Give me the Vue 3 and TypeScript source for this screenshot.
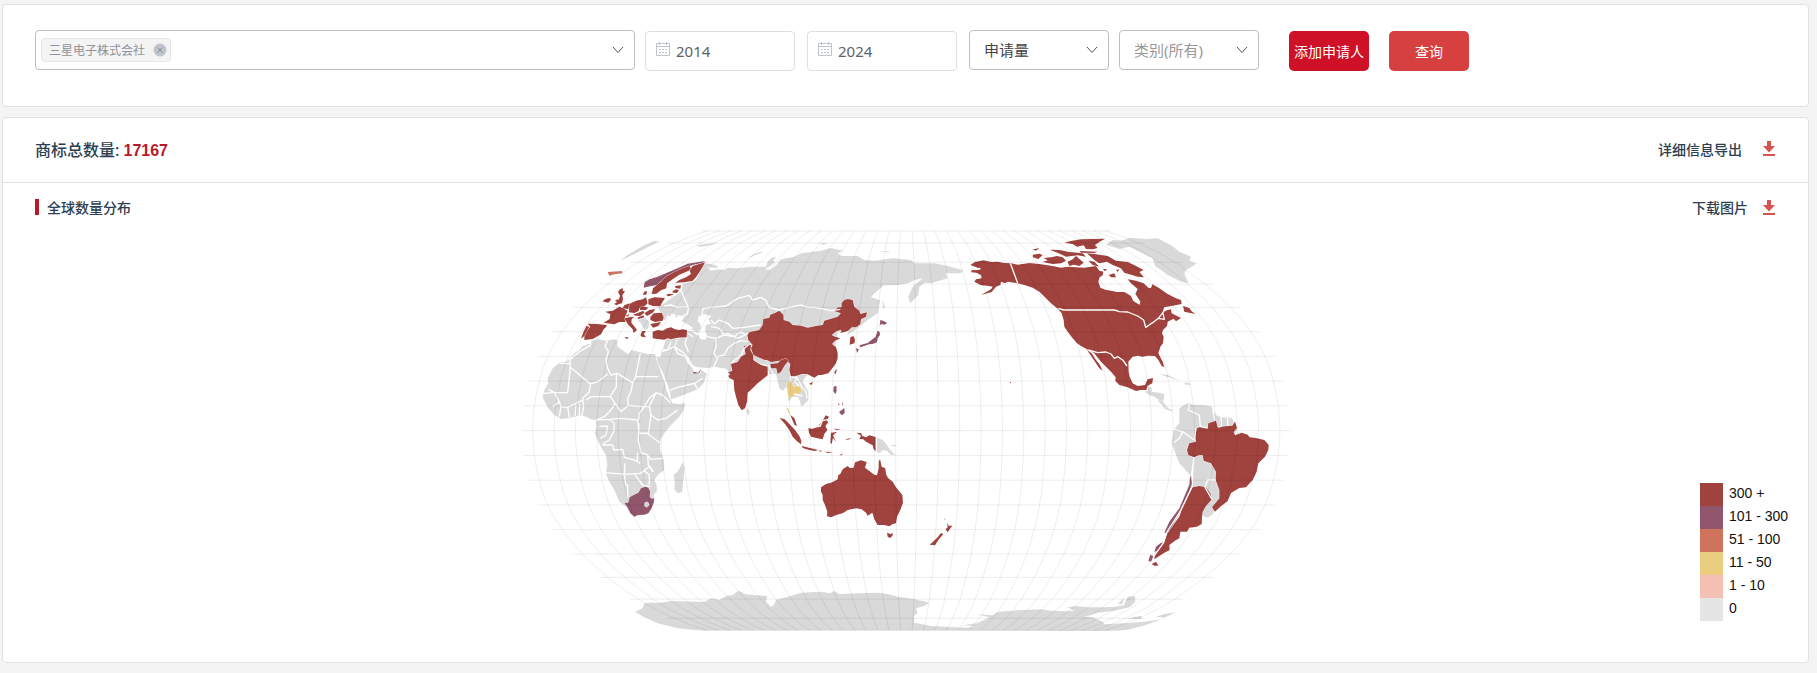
<script setup lang="ts">
import { ref } from 'vue'

interface Shape { kind: string; at: [number, number]; d: string }

const applicants = ref<string[]>(['三星电子株式会社'])
const fromYear = ref('2014')
const toYear = ref('2024')
const metric = ref('申请量')
const category = ref('')

const legend = [
  { label: '300 +', level: 'l300' },
  { label: '101 - 300', level: 'l101' },
  { label: '51 - 100', level: 'l51' },
  { label: '11 - 50', level: 'l11' },
  { label: '1 - 10', level: 'l1' },
  { label: '0', level: 'l0' },
]

// Robinson projection tables, one entry per 5 degrees of latitude
const RX = [1, .9986, .9954, .99, .9822, .973, .96, .9427, .9216, .8962, .8679, .835, .7986, .7597, .7186, .6732, .6213, .5722, .5322]
const RY = [0, .062, .124, .186, .248, .31, .372, .434, .4958, .5571, .6176, .6769, .7346, .7903, .8435, .8936, .9394, .9761, 1]
const CX = 1186
const CY = 632
const HALF_W = 1153
const HALF_H = 599

function meridian(offset: number): string {
  const pts: string[] = []
  for (let i = -18; i <= 18; i++) {
    const k = Math.abs(i)
    const x = CX + (offset / 180) * HALF_W * RX[k]
    const y = CY + Math.sign(i) * HALF_H * RY[k]
    pts.push(`${x.toFixed(1)},${y.toFixed(1)}`)
  }
  return 'M' + pts.join('L')
}
function parallel(i: number): string {
  const k = Math.abs(i)
  const y = CY + Math.sign(i) * HALF_H * RY[k]
  return `M${CX - HALF_W * RX[k]},${y}H${CX + HALF_W * RX[k]}`
}
const lines: string[] = []
for (let o = -175; o <= 175; o += 10) lines.push(meridian(o))
for (let i = -18; i <= 18; i += 2) lines.push(parallel(i))
const graticule = lines.join('')

const WEST: [number, number] = [0, 0]
const SOUTHWEST: [number, number] = [0, 600]
const ASIA: [number, number] = [660, 0]
const OCEANIA: [number, number] = [660, 540]
const NORTHAM: [number, number] = [1320, 0]
const SOUTHAM: [number, number] = [1800, 540]
const POLAR: [number, number] = [1320, 1050]

const shapes: Shape[] = [
  // Africa
  { kind: 'none', at: WEST, d: 'M240,362L262,358L285,362L310,358L320,362L318,378L330,388L345,398L352,402L362,390L385,396L410,402L432,402L437,420L447,448L455,470L462,492L468,515L476,535L485,550L505,553L522,549L518,570L505,590L480,615L460,640L448,660L447,690L458,720L460,750L440,765L430,780L437,796L438,812L428,825L429,850L415,875L400,884L370,890L352,865L325,845L310,810L295,785L285,762L289,735L285,705L275,690L262,665L252,640L257,620L255,600L240,598L225,590L205,586L190,590L170,595L150,597L130,585L112,565L104,550L95,532L100,510L112,490L110,475L118,460L125,445L145,428L165,425L175,418L190,400L205,390L215,378L240,370Z' },
  { kind: 'none', at: SOUTHWEST, d: 'M515,127L521,145L517,180L514,216L500,220L490,207L492,188L488,165L502,152Z' },
  { kind: 'l101', at: SOUTHWEST, d: 'M340,248L352,248L356,232L368,225L382,218L390,205L403,200L412,203L418,215L416,230L422,236L430,235L428,248L420,268L412,280L400,284L380,285L370,290L358,280L350,263Z' },
  { kind: 'none', at: SOUTHWEST, d: 'M402,248L410,246L415,254L408,262L400,257Z' },
  // Eurasia
  { kind: 'none', at: WEST, d: 'M465,358L458,380L450,400L449,410L437,412L441,430L455,455L468,490L478,520L480,538L500,532L530,520L560,508L578,490L585,470L588,462L572,450L568,462L552,462L545,445L530,430L522,412L530,408L545,435L560,442L590,444L610,440L645,446L655,458L700,450L765,430L775,462L795,462L805,505L815,512L826,500L830,520L832,545L845,530L862,530L872,560L892,540L892,515L875,485L885,468L900,462L960,440L980,335L1018,325L1008,345L1025,335L1045,320L1070,300L1100,280L1107,240L1080,232L1085,225L1118,196L1160,195L1190,190L1212,180L1235,175L1205,200L1192,230L1198,250L1222,225L1225,200L1240,188L1260,190L1310,175L1305,160L1350,160L1356,151L1310,138L1270,130L1210,130L1200,120L1145,115L1090,122L1060,120L1040,108L990,108L980,100L995,92L960,84L930,92L870,100L850,110L810,118L800,130L786,122L796,110L780,115L770,125L765,140L720,140L680,145L650,143L640,150L620,148L600,152L588,142L618,144L620,138L600,132L580,130L555,180L515,192L512,215L490,228L460,250L440,262L452,282L456,300L470,300L478,288L500,293L498,285L520,290L512,303L530,313L548,325L528,330L527,352L500,357Z' },
  { kind: 'sea', at: WEST, d: 'M562,290L580,282L602,288L592,296L600,312L585,315L582,332L588,345L584,359L568,357L558,340L570,325L568,312L560,303Z' },
  { kind: 'sea', at: WEST, d: 'M462,300L470,285L480,290L478,280L495,284L492,294L508,290L500,300L528,316L528,328L480,320L458,318Z' },
  { kind: 'sea', at: ASIA, d: 'M102,148L118,138L132,126L144,120L140,132L118,150Z' },
  { kind: 'none', at: ASIA, d: 'M46,116L70,102L95,94L92,98L68,107Z M262,68L290,70L275,74Z M445,94L478,94L470,97Z M455,240L462,262L456,268Z M48,563L57,575L52,586L48,580Z' },
  { kind: 'none', at: WEST, d: 'M558,76L580,72L620,70L595,76L568,81Z M330,122L345,108L365,96L395,78L430,62L445,65L410,82L370,102L350,112Z' },
  { kind: 'l300', at: WEST, d: 'M425,335L440,330L455,332L468,325L480,322L492,328L505,330L515,328L528,330L527,352L500,353L480,358L470,355L460,359L445,358L425,355Z' },
  { kind: 'l51', at: WEST, d: 'M290,156L300,155L333,153L334,160L310,163L295,167Z M338,287L355,282L352,290Z' },
  { kind: 'l300', at: WEST, d: 'M310,252L318,246L312,241L324,238L327,227L321,216L328,207L336,205L335,212L342,214L334,226L336,238L333,250L322,253L316,256Z M274,244L285,236L297,234L300,239L292,248Z' },
  { kind: 'l101', at: WEST, d: 'M398,203L401,187L415,178L440,170L475,155L500,145L530,131L550,128L583,123L575,128L545,135L510,148L465,170L440,195L420,198Z M545,455L562,458L572,446L565,460L548,461Z' },
  { kind: 'l300', at: WEST, d: 'M422,222L426,205L450,185L465,170L490,156L515,145L535,138L540,145L533,152L505,164L487,176L468,190L466,205L450,211L436,221Z M493,188L505,180L525,172L540,162L536,152L545,138L582,127L575,140L568,152L555,172L545,182L520,187Z' },
  { kind: 'l300', at: WEST, d: 'M466,224L475,221L490,223L482,231L470,229Z M484,214L495,208L504,210L498,219L486,218Z M492,198L510,196L508,206L494,204Z M395,224L400,215L408,212L406,224Z' },
  { kind: 'l300', at: WEST, d: 'M283,275L305,272L325,260L335,264L350,272L342,290L344,306L325,306L310,313L278,308L296,297L298,283Z M355,252L375,242L395,238L405,232L410,250L402,257L385,265L383,273L370,279L354,277Z M335,264L340,256L355,250L352,268Z' },
  { kind: 'l300', at: WEST, d: 'M412,238L430,232L462,234L452,250L448,259L425,258L412,253Z M385,264L395,259L412,263L405,270L388,270Z M366,284L380,279L397,272L400,278L388,288L374,287Z M400,280L415,270L433,267L425,278L408,288Z M418,292L428,280L452,278L458,292L455,302L432,306L418,300Z M418,312L450,306L442,318L426,323Z M380,292L400,286L398,293L382,297Z' },
  { kind: 'none', at: WEST, d: 'M380,300L402,294L415,305L412,325L400,330L392,313Z' },
  { kind: 'l300', at: WEST, d: 'M388,345L394,333L405,333L398,342L405,352L392,350Z M340,295L355,292L370,290L362,298L361,308L372,322L378,330L368,339L365,328L350,312L345,302Z M340,352L352,352L349,358Z' },
  { kind: 'l300', at: WEST, d: 'M230,311L258,312L287,315L286,320L278,328L270,343L245,357L220,360L220,350L232,328L238,320Z M226,318L235,320L220,348L210,356L217,337Z' },
  // Asia
  { kind: 'l300', at: ASIA, d: 'M48,340L60,335L85,330L95,315L97,297L115,293L118,284L130,280L145,272L157,285L158,300L175,305L185,315L210,317L230,323L255,318L275,315L280,302L320,290L330,280L308,272L322,262L332,262L332,250L340,240L350,237L365,240L370,260L385,272L388,282L408,277L405,290L390,298L388,313L375,322L362,322L352,332L338,337L328,338L332,330L318,332L302,345L312,350L328,355L312,362L303,372L315,382L320,398L320,415L315,430L300,450L292,460L272,465L262,465L250,473L240,468L228,462L212,462L195,468L180,470L175,450L178,432L165,420L145,422L120,426L108,420L90,420L68,408L60,385L65,375L52,360Z' },
  { kind: 'l300', at: ASIA, d: 'M0,432L20,426L30,410L44,402L38,378L60,375L58,390L68,408L70,422L90,435L110,440L110,466L95,478L80,490L65,505L50,518L48,545L42,565L32,571L22,555L15,530L10,510L8,480L-4,475L-8,468L-2,462L-10,458L4,452Z M118,432L140,430L150,420L165,416L172,422L160,438L150,455L140,462L136,445L120,445Z' },
  { kind: 'none', at: ASIA, d: 'M68,406L80,412L108,424L112,436L88,430L68,420Z' },
  { kind: 'l300', at: ASIA, d: 'M235,490L246,486L240,496Z M358,352L368,347L372,360L370,370L356,374Z M312,452L318,447L314,462L310,460Z M178,585L190,594L198,618L190,614Z' },
  { kind: 'l11', at: ASIA, d: 'M167,488L180,484L187,500L205,498L212,514L206,521L192,522L185,530L178,533L172,528Z M165,562L172,566L179,584L174,580Z' },
  { kind: 'l101', at: ASIA, d: 'M440,332L446,336L447,345L440,355L438,367L425,372L414,373L400,378L388,382L385,376L410,369L425,357L434,350Z M448,300L456,302L468,308L462,314L450,312L446,319Z M375,385L384,388L378,399Z M308,500L316,497L317,512L313,523L307,514Z M325,575L340,564L341,578L334,586L326,580Z M322,548L326,554L322,556Z M333,543L337,555L334,556Z' },
  { kind: 'l300', at: OCEANIA, d: 'M146,54L160,57L175,72L190,88L205,108L211,122L210,133L198,124L185,110L175,90L162,72Z M212,138L225,141L240,145L262,150L252,153L232,149L215,144Z M232,85L245,86L262,78L275,62L284,46L294,50L288,60L291,68L283,78L289,90L280,102L275,118L260,115L240,110L234,98Z M300,98L318,96L306,106L315,126L306,114L302,131L298,130Z M376,98L390,99L394,108L405,112L415,106L436,112L436,155L428,148L425,136L405,125L397,118L385,117L390,107Z' },
  { kind: 'l300', at: OCEANIA, d: 'M264,151L274,153L266,155Z M280,155L306,156L292,159Z M325,166L336,160L332,166Z M306,86L330,87L318,90Z M342,118L362,114L352,119Z M640,356L643,356L642,360Z' },
  { kind: 'none', at: OCEANIA, d: 'M436,112L455,120L466,132L475,146L492,166L480,164L468,152L455,150L448,158L436,157Z M475,136L500,134L490,139Z' },
  { kind: 'l300', at: OCEANIA, d: 'M270,262L285,252L300,248L312,242L320,238L322,225L328,222L335,208L350,198L357,204L368,203L372,187L390,181L407,186L402,203L415,213L430,224L438,226L443,205L443,185L447,177L452,200L463,205L465,222L471,234L485,245L495,262L506,275L514,285L516,308L508,330L498,350L495,370L485,372L475,379L460,375L440,375L430,358L424,338L410,347L405,338L392,328L375,325L350,330L335,340L318,344L300,352L288,349L289,335L282,315L275,300L275,285L270,275Z M468,398L478,402L486,400L484,408L477,414L470,410Z M648,368L653,377L664,377L656,388L650,397L644,388L650,382Z M630,399L637,402L622,420L612,436L596,434L606,425L620,412Z' },
  // North America
  { kind: 'l300', at: NORTHAM, d: 'M58,135L72,126L98,121L120,126L140,125L160,129L180,130L200,134L235,129L265,132L300,137L330,143L350,140L375,142L400,143L435,138L445,152L457,155L455,166L446,172L442,185L448,203L465,210L480,212L498,216L520,216L540,228L546,242L555,248L566,254L568,245L560,232L553,222L560,207L540,190L530,178L555,182L578,190L592,203L600,204L604,193L625,205L650,222L675,235L690,240L692,252L665,257L640,262L635,275L650,270L660,268L662,280L672,285L690,294L675,304L668,296L650,305L648,318L636,330L633,340L638,350L636,370L628,380L622,400L635,425L640,442L632,438L622,420L612,408L590,407L575,410L560,407L545,410L532,425L533,455L536,470L545,490L560,498L582,495L590,478L606,474L604,490L590,497L586,510L570,510L555,513L530,502L505,495L493,483L494,472L480,455L465,440L450,425L430,400L412,390L390,378L378,370L365,355L350,335L340,320L338,300L332,280L322,268L300,250L285,235L265,215L245,203L220,195L200,190L170,185L162,190L150,185L148,195L135,200L122,216L90,225L120,208L125,200L110,197L90,196L70,185L75,178L92,175L90,165L76,158L62,157L60,151L85,150L90,144L80,143Z M408,390L422,400L435,420L445,432L455,452L445,445L425,415Z M696,258L715,264L722,274L733,282L700,275Z M640,277L660,288L665,296L650,290Z' },
  { kind: 'l300', at: NORTHAM, d: 'M340,68L360,63L390,58L462,56L445,66L432,75L440,84L425,88L405,87L398,76L378,80L365,72Z M245,104L265,101L275,105L262,117L246,112Z M278,114L300,112L318,108L335,112L345,122L330,130L305,132L275,126L290,121Z M350,125L365,118L375,108L398,128L385,138L368,134L355,138Z M408,100L430,102L470,108L495,122L530,126L555,138L578,150L565,156L579,172L560,170L545,166L520,158L510,145L485,135L468,125L445,130L430,120Z M296,89L325,90L355,96L395,100L405,110L380,106L345,110L320,98Z M245,88L265,85L255,92Z M385,93L440,95L430,99L390,98Z M412,122L430,125L445,140L425,135Z M473,165L490,160L495,172L480,172Z M455,146L468,148L462,154Z M495,150L505,148L500,156Z' },
  { kind: 'none', at: NORTHAM, d: 'M465,75L485,60L510,62L540,53L585,57L620,55L640,65L660,75L685,95L720,110L715,122L738,130L725,138L705,150L700,162L712,188L690,185L670,175L650,165L630,150L612,138L605,115L575,100L555,90L535,80L505,87L490,82Z' },
  { kind: 'none', at: NORTHAM, d: 'M582,515L590,512L590,502L602,502L602,515L622,518L640,522L636,548L622,540L612,530L598,527Z M630,553L645,562L665,570L660,574L642,567Z M625,463L650,464L685,482L660,474Z M698,488L712,488L722,494L705,494Z' },
  { kind: 'l300', at: NORTHAM, d: 'M177,486H180V489H177Z' },
  // South America
  { kind: 'none', at: SOUTHAM, d: 'M205,25L220,14L232,8L245,14L285,16L302,20L305,30L315,45L330,52L362,54L372,68L378,90L320,190L325,290L312,318L306,343L290,353L274,347L240,262L240,228L205,190L182,130L188,90L205,70Z M140,-2L158,8L172,24L180,28L165,22L145,8Z' },
  { kind: 'l300', at: SOUTHAM, d: 'M228,150L235,130L255,125L252,105L257,85L270,80L290,84L292,70L315,62L320,82L350,78L364,77L372,65L378,84L368,96L372,106L392,98L410,104L416,112L435,114L460,120L473,135L472,150L462,170L442,190L437,215L425,240L405,262L385,264L360,279L350,303L328,320L312,335L303,322L325,295L325,270L314,240L315,215L300,190L278,182L275,165L262,166L250,172L232,165Z' },
  { kind: 'l300', at: SOUTHAM, d: 'M245,262L265,258L285,262L298,280L303,298L285,318L275,335L273,350L272,372L258,380L235,383L228,395L208,395L205,415L192,422L175,435L176,450L160,458L145,468L130,478L132,460L160,425L170,398L205,350L215,320L235,280Z M122,492L135,485L142,497L130,497Z' },
  { kind: 'l101', at: SOUTHAM, d: 'M238,226L244,250L235,275L212,320L202,345L182,382L168,400L160,398L175,365L205,325L222,285L235,255Z M148,430L158,427L140,452L130,455L135,440Z M118,464L127,468L120,485L112,482Z' },
  // Antarctica
  { kind: 'none', at: SOUTHWEST, d: 'M372,575L395,565L400,550L415,548L450,548L480,543L580,546L600,535L625,540L645,528L665,525L680,513L692,516L700,522L735,526L768,528L765,545L780,560L788,555L795,540L830,530L870,518L930,515L958,520L968,513L985,522L1040,520L1100,518L1130,522L1160,530L1212,538L1255,548L1240,558L1215,565L1220,578L1209,588L1210,608L1260,618L1320,621L1320,631L560,631L500,625L440,610L400,592Z' },
  { kind: 'none', at: POLAR, d: 'M0,171L50,173L70,168L35,166L78,160L115,142L78,133L125,136L140,126L200,121L270,118L300,122L345,124L370,122L350,112L375,108L410,112L460,112L500,110L520,105L530,80L552,78L553,95L535,112L490,122L440,128L400,140L425,142L455,155L460,163L520,160L580,155L632,148L585,165L530,179L500,182L0,181Z M615,140L640,132L675,127L640,143Z M530,146L550,140L572,138L570,147Z M500,100L520,85L512,102Z' },
]

const borders: Shape[] = [
  { kind: '', at: WEST, d: 'M240,362L238,376L205,395L178,418L176,430L146,430 M178,430L178,442L238,492L262,484L290,462 M178,442L170,518L130,518L112,508 M290,362L282,378L292,395L285,420L290,445L300,465L318,460L365,488L374,470L388,400 M374,470H442 M238,492L235,515L215,535L218,560 M316,462L316,500L298,530L240,530L225,540 M365,488L360,515L350,535L352,556L372,558L400,560L415,535L435,518L455,525 M298,530L312,550L300,570L280,590L256,600 M312,550L330,575L352,556 M145,545L150,560L170,562L195,550L215,540 M170,562L175,592 M195,555L193,588 M206,553L205,586 M218,560L213,588 M130,518L145,545L125,560 M150,560L145,590 M98,520L125,518 M435,518L415,560L420,585L440,600L465,595L500,570 M455,525L478,548 M415,560L400,560L385,580L383,600 M420,585L412,640L385,640L380,600' },
  { kind: '', at: SOUTHWEST, d: 'M256,0L295,-2L330,-5L380,0 M295,-2L310,10L308,35L295,60L275,72 M265,20L290,18L285,45L268,55 M275,75H305L308,90L335,88L340,112L370,120L388,130 M385,10L382,60L390,98L410,105L420,120 M385,40H408L446,68 M420,118L455,115 M283,158L345,163L388,160L415,140L425,155 M342,130L340,165L345,195H350L350,235 M372,165L395,195L418,200 M388,160L400,152L415,165L415,195 M410,105L412,135L428,155 M380,98L378,125' },
  { kind: '', at: WEST, d: 'M572,290L576,265L600,262L645,258L665,245L680,235L715,226L725,240L750,232L765,242L775,262L803,270L835,262L870,255L890,262L910,262L960,272L988,268 M600,300L610,312L625,300L650,310L665,325L700,322L750,315 M600,320L625,325L640,345L670,350 M588,350L615,355L615,380L608,400L620,415L608,440 M615,355L650,340L680,355L712,340 M612,412L640,405L650,385L670,370L690,362L710,365 M670,350L688,335L705,345 M660,430L690,405L700,385L712,375 M500,355L490,380L520,400L528,412 M528,352L522,370L532,395 M455,395L490,380L500,400L528,412 M478,510L500,502L530,495L550,490L575,475 M550,490L560,508 M512,215L520,235L532,262L530,280L515,290 M460,258L480,255L500,262L530,260 M528,330L545,332L560,345 M532,340L545,350 M455,390H470L480,365 M462,235L490,225' },
  { kind: '', at: ASIA, d: 'M112,436L120,450L130,470 M180,470L200,475L190,485L205,498 M195,468L212,500L225,515L228,535 M190,522L215,528 M180,484L178,470 M245,84L268,77L274,62L292,60 M360,345L372,348' },
  { kind: '', at: OCEANIA, d: 'M244,83L268,78L274,62L294,58 M436,110V158' },
  { kind: '', at: NORTHAM, d: 'M178,130L200,190 M322,265L338,270H490L505,275L530,276L560,288L578,300L584,322L605,308L622,295L640,272L655,262 M622,295L640,298L636,280 M412,390L440,398L465,396L480,402L490,415L500,410L515,420L528,438' },
  { kind: '', at: SOUTHAM, d: 'M235,10L232,30L265,45L268,80L290,84 M305,30L312,60 M330,50L332,78L322,82 M350,52L350,78 M188,88L215,95L205,115L188,128 M215,95L250,120L255,85 M248,172L240,228 M248,172L245,215L244,262 M314,240L290,240L282,262L303,298 M244,258L210,330L165,400L158,428L128,470' },
]

const move = (s: Shape) => `translate(${s.at[0]} ${s.at[1]})`
</script>

<template>
  <main class="page">
    <form class="card filters" @submit.prevent>
      <div class="applicants">
        <span v-for="name in applicants" :key="name" class="tag">
          <span>{{ name }}</span>
          <button type="button" class="tag-close" :aria-label="'移除 ' + name" @click="applicants = applicants.filter(n => n !== name)">
            <svg viewBox="0 0 14 14"><circle cx="7" cy="7" r="6.5" fill="#c0c4cc" /><path d="M4.5 4.5l5 5m0-5l-5 5" stroke="#858b96" fill="none" /></svg>
          </button>
        </span>
        <input class="search" type="text" aria-label="申请人">
        <svg class="chevron" viewBox="0 0 12 8"><path d="M1 1l5 5.5L11 1" /></svg>
      </div>
      <label class="year">
        <svg viewBox="0 0 14 14"><path d="M.5 1.5h13v12H.5zM.5 4.5h13M3.5 0v3M10.5 0v3M3 7.500h2m1 0h2m1 0h2M3 10.500h2m1 0h2m1 0h2" /></svg>
        <input v-model="fromYear" type="text" aria-label="开始年份">
      </label>
      <label class="year">
        <svg viewBox="0 0 14 14"><path d="M.5 1.5h13v12H.5zM.5 4.5h13M3.5 0v3M10.5 0v3M3 7.500h2m1 0h2m1 0h2M3 10.500h2m1 0h2m1 0h2" /></svg>
        <input v-model="toYear" type="text" aria-label="结束年份">
      </label>
      <div class="pick">
        <select v-model="metric" aria-label="统计指标"><option>申请量</option></select>
        <svg class="chevron" viewBox="0 0 12 8"><path d="M1 1l5 5.5L11 1" /></svg>
      </div>
      <div class="pick last">
        <select v-model="category" class="muted" aria-label="类别"><option value="">类别(所有)</option></select>
        <svg class="chevron" viewBox="0 0 12 8"><path d="M1 1l5 5.5L11 1" /></svg>
      </div>
      <button type="button" class="btn add">添加申请人</button>
      <button type="submit" class="btn query">查询</button>
    </form>

    <section class="card">
      <header class="total">
        <h1>商标总数量: <b>17167</b></h1>
        <button type="button" class="download wide">详细信息导出
          <svg viewBox="0 0 12 15"><path d="M4 0h4v5h4L6 11.500 0 5h4zM0 13h12v2H0z" /></svg>
        </button>
      </header>
      <header class="heading">
        <h2>全球数量分布</h2>
        <button type="button" class="download">下载图片
          <svg viewBox="0 0 12 15"><path d="M4 0h4v5h4L6 11.500 0 5h4zM0 13h12v2H0z" /></svg>
        </button>
      </header>
      <div class="chart">
        <svg class="map" viewBox="0 0 2370 1275" role="img" aria-label="全球数量分布">
          <path v-for="(s, i) in shapes" :key="i" :class="s.kind" :transform="move(s)" :d="s.d" />
          <path v-for="(s, i) in borders" :key="'b' + i" class="border" :transform="move(s)" :d="s.d" />
          <path class="graticule" :d="graticule" />
        </svg>
        <ul class="legend">
          <li v-for="item in legend" :key="item.label"><i :class="item.level"></i>{{ item.label }}</li>
        </ul>
      </div>
    </section>
  </main>
</template>

<style>
body { background: #f4f4f4; }
</style>

<style scoped>
* { box-sizing: border-box; }
.page {
  padding: 4px 8px 11px 2px;
  display: flex;
  flex-direction: column;
  gap: 10px;
  font-family: "Noto Sans", "Noto Sans CJK SC", sans-serif;
  font-size: 14px;
  color: #2c3e50;
}
.card { background: #fff; border: 1px solid #e2e2e2; border-radius: 4px; }
button, input, select { font: inherit; margin: 0; }
button { cursor: pointer; border: 0; padding: 0; }
.filters { display: flex; align-items: flex-start; padding: 25px 32px 35px; }
.applicants {
  flex: 0 1 600px;
  height: 40px;
  display: flex;
  align-items: center;
  border: 1px solid #bfbfbf;
  border-radius: 4px;
  padding: 0 10px 0 5px;
  margin-right: 10px;
}
.tag {
  display: flex;
  align-items: center;
  height: 24px;
  padding: 0 3px 0 7px;
  gap: 8px;
  border: 1px solid #e6e6e8;
  border-radius: 4px;
  background: #f4f4f5;
  color: #909399;
  font-size: 12px;
  white-space: nowrap;
}
.tag-close { width: 14px; height: 14px; background: none; }
.tag-close svg { display: block; }
.search { flex: 1; min-width: 0; border: 0; outline: 0; background: none; }
.chevron { width: 12px; height: 8px; flex: none; fill: none; stroke: #555; pointer-events: none; }
.year {
  flex: 0 1 150px;
  height: 40px;
  display: flex;
  align-items: center;
  gap: 6px;
  margin: 1px 12px 0 0;
  padding: 0 10px;
  border: 1px solid #dcdfe6;
  border-radius: 4px;
  font-size: 15px;
}
.year svg { width: 14px; height: 14px; flex: none; margin-bottom: 5px; fill: none; stroke: #c0c4cc; }
.year input { width: 100%; min-width: 0; padding: 0; border: 0; outline: 0; background: none; color: #606266; }
.pick { flex: 0 1 140px; display: grid; align-items: center; margin-right: 10px; }
.pick > * { grid-area: 1 / 1; }
.pick .chevron { justify-self: end; margin-right: 11px; }
.pick.last { margin-right: 30px; }
.pick select {
  appearance: none;
  width: 100%;
  height: 40px;
  padding: 0 14px;
  border: 1px solid #bfbfbf;
  border-radius: 4px;
  background: #fff;
  font-size: 15px;
  color: #444;
}
.pick .muted { color: #999; }
.btn { width: 80px; height: 40px; margin: 1px 20px 0 0; border-radius: 5px; color: #fff; white-space: nowrap; }
.add { background: #ce1126; }
.query { background: #d64041; }
.total, .heading { display: flex; align-items: center; justify-content: space-between; padding: 0 33px 0 32px; }
.total { height: 65px; padding-bottom: 3px; border-bottom: 1px solid #e2e2e2; }
.heading { height: 37px; padding-top: 11px; }
h1, h2 { margin: 0; font-weight: 500; }
h1 { font-size: 16px; }
h1 b { font-family: "Liberation Sans", sans-serif; color: #b8192b; }
h2 { font-size: 14px; display: flex; align-items: center; gap: 8px; }
h2::before { content: ""; width: 4px; height: 16px; background: #b8192b; }
.download { display: flex; align-items: center; gap: 15px; background: none; color: inherit; font-weight: 500; }
.download.wide { gap: 21px; }
.download svg { width: 12px; height: 15px; fill: #d9534f; }
.chart { display: grid; grid-template-columns: 1fr minmax(0, 790px) 1fr; padding-bottom: 17px; }
.map { grid-column: 2; width: 100%; display: block; }
.legend {
  justify-self: end;
  align-self: end;
  width: 90px;
  margin: 0 18px 24px 0;
  padding: 0;
  list-style: none;
  font-family: "Liberation Sans", sans-serif;
  color: #111;
}
.legend li { display: flex; height: 23px; line-height: 20px; gap: 6px; white-space: nowrap; }
.legend i { width: 23px; height: 23px; flex: none; }
.legend .l300 { background: #a0423e; }
.legend .l101 { background: #91566c; }
.legend .l51 { background: #cf735c; }
.legend .l11 { background: #ebcd7f; }
.legend .l1 { background: #f5bfb3; }
.legend .l0 { background: #e5e5e5; }
.map .none { fill: #d9d9d9; }
.map .sea { fill: #fff; }
.map .l300 { fill: #a0423e; }
.map .l101 { fill: #91566c; }
.map .l51 { fill: #cf735c; }
.map .l11 { fill: #ebcd7f; }
.map .l300, .map .l101, .map .l51, .map .l11, .map .none { stroke: #fff; stroke-width: 2; paint-order: stroke; }
.map .border { fill: none; stroke: #fff; stroke-width: 4; stroke-linejoin: round; }
.map .graticule { fill: none; stroke: #000; stroke-opacity: .07; stroke-width: 3; }
</style>
